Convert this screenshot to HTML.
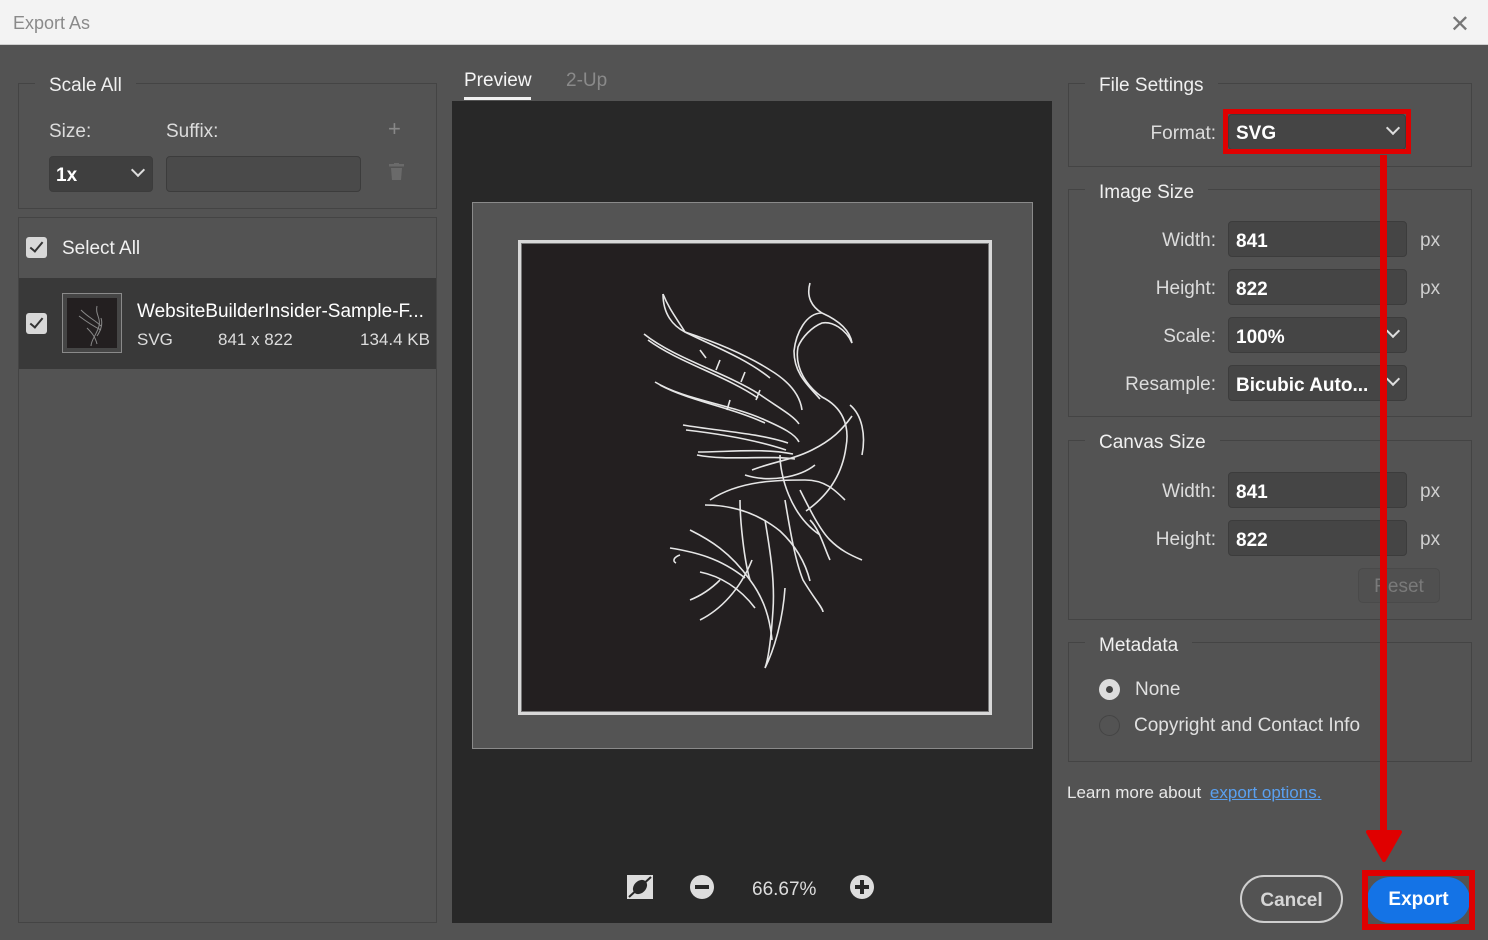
<!DOCTYPE html>
<html><head><meta charset="utf-8"><style>
*{box-sizing:border-box;margin:0;padding:0}
body{width:1488px;height:940px;background:#535353;font-family:"Liberation Sans",sans-serif;color:#e8e8e8;position:relative;overflow:hidden}
.abs{position:absolute}
.title{left:0;top:0;width:1488px;height:45px;background:#f3f3f3;border-bottom:1px solid #cfcfcf}
.title span{position:absolute;left:13px;top:13px;font-size:18px;color:#8a8a8a}
.box{position:absolute;border:1px solid #444;}
.leg{position:absolute;background:#535353;padding:0 14px;font-size:19px;color:#f0f0f0;margin-top:2px}
.lbl{position:absolute;font-size:19px;color:#dcdcdc;text-align:right;margin-top:2px}
.inp{position:absolute;background:#454545;border:1px solid #3c3c3c;border-radius:4px;font-size:19px;font-weight:bold;color:#fff;padding:9px 7px 7px}
.px{position:absolute;font-size:19px;color:#cfcfcf;margin-top:2px}
.chev{position:absolute;width:10px;height:10px;border-right:2.5px solid #ddd;border-bottom:2.5px solid #ddd;transform:rotate(45deg)}
.cb{position:absolute;width:21px;height:21px;background:#d8d8d8;border-radius:3px}
.cb:after{content:"";position:absolute;left:7px;top:2px;width:5px;height:11px;border-right:2.5px solid #333;border-bottom:2.5px solid #333;transform:rotate(40deg)}
.t{margin-top:2px}
</style></head><body>
<div class="abs title"><span>Export As</span><div class="abs" style="right:18px;top:10px;font-size:24px;color:#777;font-weight:300">✕</div></div>

<!-- left -->
<div class="box" style="left:18px;top:83px;width:419px;height:126px"></div>
<div class="leg" style="left:35px;top:73px">Scale All</div>
<div class="lbl" style="left:49px;top:119px">Size:</div>
<div class="lbl" style="left:166px;top:119px">Suffix:</div>
<div class="abs" style="left:388px;top:116px;font-size:22px;color:#888">+</div>
<div class="inp" style="left:49px;top:156px;width:104px;height:36px;background:#3f3f3f;padding:8px 6px 6px">1x</div>
<div class="chev" style="left:133px;top:165px"></div>
<div class="inp" style="left:166px;top:156px;width:195px;height:36px;background:#4a4a4a"></div>
<svg class="abs" style="left:389px;top:163px" width="15" height="17"><rect x="0" y="1" width="15" height="2.5" fill="#6a6a6a"/><rect x="5" y="0" width="5" height="2" fill="#6a6a6a"/><path d="M2 5h11l-1 12H3z" fill="#6a6a6a"/></svg>

<div class="box" style="left:18px;top:217px;width:419px;height:706px"></div>
<div class="cb" style="left:26px;top:237px"></div>
<div class="abs t" style="left:62px;top:236px;font-size:19px;color:#f0f0f0">Select All</div>
<div class="abs" style="left:19px;top:278px;width:417px;height:91px;background:#393939"></div>
<div class="cb" style="left:26px;top:313px"></div>
<div class="abs" style="left:62px;top:293px;width:60px;height:60px;background:#454545;border:1px solid #8a8a8a"></div>
<div class="abs" style="left:67px;top:298px;width:50px;height:50px;background:#231f20"></div>
<svg class="abs" style="left:67px;top:298px" width="50" height="50" fill="none" stroke="#888" stroke-width="1"><path d="M14 12c8 8 14 10 20 16M12 18c8 6 14 10 22 14M30 8c-2 8 4 12 2 20-2 8-8 14-8 20M20 30c4 4 8 8 10 16M34 20c2 6 0 12-4 18"/></svg>
<div class="abs t" style="left:137px;top:299px;font-size:19px;color:#fff">WebsiteBuilderInsider-Sample-F...</div>
<div class="abs t" style="left:137px;top:328px;font-size:17px;color:#ddd">SVG</div>
<div class="abs t" style="left:218px;top:328px;font-size:17px;color:#ddd">841 x 822</div>
<div class="abs t" style="left:360px;top:328px;font-size:17px;color:#ddd">134.4 KB</div>

<!-- center -->
<div class="abs t" style="left:464px;top:68px;font-size:19px;color:#f5f5f5">Preview</div>
<div class="abs" style="left:464px;top:97px;width:67px;height:3px;background:#f0f0f0"></div>
<div class="abs t" style="left:566px;top:68px;font-size:19px;color:#8a8a8a">2-Up</div>
<div class="abs" style="left:452px;top:101px;width:600px;height:822px;background:#282828"></div>
<div class="abs" style="left:472px;top:202px;width:561px;height:547px;background:#545454;border:1px solid #8a8a8a"></div>
<div class="abs" style="left:518px;top:240px;width:474px;height:475px;background:#231f20;border:3px solid #d8d8d8;box-shadow:inset 0 0 0 1px #777"></div>
<svg class="abs" style="left:0;top:0" width="1488" height="940" fill="none" stroke="#e6e6e6" stroke-width="1.6">
<path d="M663 294c0 20 10 32 22 38 30 10 60 22 85 38 20 12 30 25 32 40"/>
<path d="M663 294c6 15 14 25 22 38M685 332c28 14 60 26 85 46"/>
<path d="M644 334c30 24 80 38 115 60 20 14 35 22 40 30"/>
<path d="M648 340c30 22 78 36 110 58"/>
<path d="M655 382c30 18 75 22 110 38 18 8 30 14 34 22"/>
<path d="M660 385c30 16 70 22 105 38"/>
<path d="M683 425c35 6 75 8 105 18"/>
<path d="M686 430c35 4 70 10 100 20"/>
<path d="M698 452c30 0 65 -4 95 2"/>
<path d="M697 455c30 6 70 0 98 4"/>
<path d="M700 350l6 8M720 360l-4 10M745 372l-4 10M730 400l-3 10M760 390l-4 10"/>
<path d="M810 283c-4 14 2 24 12 30 18 8 28 18 30 30-6-14-20-22-30-20-10 4-20 14-24 24-4 22 10 40 24 50 20 10 28 28 24 50-4 30-20 50-40 64"/>
<path d="M822 313c-16 0-26 20-28 38 0 24 16 36 26 48"/>
<path d="M850 405c12 10 16 30 12 50"/>
<path d="M752 470c20-8 40-10 60-20 20-10 30-20 40-34"/>
<path d="M745 475c25 8 55 2 70-10"/>
<path d="M710 500c30-20 70-20 95-20 20 0 30 10 40 20"/>
<path d="M705 505c30 0 55 10 75 26 15 14 25 30 30 50"/>
<path d="M690 530c20 10 40 22 60 50 15 20 20 40 22 60"/>
<path d="M670 548c25 4 50 10 75 30"/>
<path d="M700 572c20 4 40 16 55 36"/>
<path d="M700 620c20-10 40-30 52-60"/>
<path d="M765 520c5 30 10 60 8 90 -2 30-5 50-8 58 10-20 18-50 20-80"/>
<path d="M785 500c5 30 10 60 18 80 12 20 20 28 20 32"/>
<path d="M800 490c10 20 20 40 30 50 10 10 20 15 32 20"/>
<path d="M740 500c0 20 4 60 10 80"/>
<path d="M780 455c0 20 10 60 40 80"/>
<path d="M810 520c10 10 15 30 20 40"/>
<path d="M680 555c-6 2-8 6-4 8M690 600c10-4 20-10 30-20"/>
</svg>
<svg class="abs" style="left:626px;top:874px" width="30" height="26"><rect x="1" y="1" width="26" height="24" fill="#ddd"/><path d="M3 23L25 3" stroke="#282828" stroke-width="2"/><ellipse cx="14" cy="13" rx="8" ry="6" fill="#282828" transform="rotate(-45 14 13)"/></svg>
<svg class="abs" style="left:689px;top:874px" width="26" height="26"><circle cx="13" cy="13" r="12" fill="#ddd"/><rect x="6" y="11" width="14" height="4" fill="#282828"/></svg>
<div class="abs t" style="left:752px;top:877px;font-size:19px;color:#ddd">66.67%</div>
<svg class="abs" style="left:849px;top:874px" width="26" height="26"><circle cx="13" cy="13" r="12" fill="#ddd"/><rect x="6" y="11" width="14" height="4" fill="#282828"/><rect x="11" y="6" width="4" height="14" fill="#282828"/></svg>

<!-- right -->
<div class="box" style="left:1068px;top:83px;width:404px;height:84px"></div>
<div class="leg" style="left:1085px;top:73px">File Settings</div>
<div class="lbl" style="left:1100px;top:121px;width:116px">Format:</div>
<div class="inp" style="left:1228px;top:114px;width:178px;height:36px;padding:8px 7px 6px">SVG</div>
<div class="chev" style="left:1388px;top:123px"></div>

<div class="box" style="left:1068px;top:189px;width:404px;height:228px"></div>
<div class="leg" style="left:1085px;top:180px">Image Size</div>
<div class="lbl" style="left:1100px;top:228px;width:116px">Width:</div>
<div class="inp" style="left:1228px;top:221px;width:179px;height:36px">841</div>
<div class="px" style="left:1420px;top:228px">px</div>
<div class="lbl" style="left:1100px;top:276px;width:116px">Height:</div>
<div class="inp" style="left:1228px;top:269px;width:179px;height:36px">822</div>
<div class="px" style="left:1420px;top:276px">px</div>
<div class="lbl" style="left:1100px;top:324px;width:116px">Scale:</div>
<div class="inp" style="left:1228px;top:317px;width:179px;height:36px">100%</div>
<div class="chev" style="left:1388px;top:326px"></div>
<div class="lbl" style="left:1100px;top:372px;width:116px">Resample:</div>
<div class="inp" style="left:1228px;top:365px;width:179px;height:36px">Bicubic Auto...</div>
<div class="chev" style="left:1388px;top:374px"></div>

<div class="box" style="left:1068px;top:440px;width:404px;height:180px"></div>
<div class="leg" style="left:1085px;top:430px">Canvas Size</div>
<div class="lbl" style="left:1100px;top:479px;width:116px">Width:</div>
<div class="inp" style="left:1228px;top:472px;width:179px;height:36px">841</div>
<div class="px" style="left:1420px;top:479px">px</div>
<div class="lbl" style="left:1100px;top:527px;width:116px">Height:</div>
<div class="inp" style="left:1228px;top:520px;width:179px;height:36px">822</div>
<div class="px" style="left:1420px;top:527px">px</div>
<div class="abs" style="left:1358px;top:568px;width:82px;height:35px;border:1px solid #4a4a4a;border-radius:5px;background:#505050;font-size:19px;color:#7a7a7a;text-align:center;padding-top:7px">Reset</div>

<div class="box" style="left:1068px;top:642px;width:404px;height:120px"></div>
<div class="leg" style="left:1085px;top:633px">Metadata</div>
<div class="abs" style="left:1099px;top:679px;width:21px;height:21px;border-radius:50%;background:#ddd"></div>
<div class="abs" style="left:1106px;top:686px;width:7px;height:7px;border-radius:50%;background:#444"></div>
<div class="abs t" style="left:1135px;top:677px;font-size:19px;color:#e0e0e0">None</div>
<div class="abs" style="left:1099px;top:715px;width:21px;height:21px;border-radius:50%;border:1.5px solid #444"></div>
<div class="abs t" style="left:1134px;top:713px;font-size:19px;color:#e0e0e0">Copyright and Contact Info</div>
<div class="abs t" style="left:1067px;top:781px;font-size:17px;color:#e8e8e8">Learn more about <span style="color:#5aa0f0;text-decoration:underline;margin-left:4px">export options.</span></div>

<div class="abs" style="left:1240px;top:875px;width:103px;height:48px;border:2px solid #cfcfcf;border-radius:24px;font-size:19px;font-weight:bold;color:#d6d6d6;text-align:center;padding-top:13px">Cancel</div>
<div class="abs" style="left:1367px;top:877px;width:103px;height:46px;background:#1473e6;border-radius:23px;font-size:19px;font-weight:bold;color:#fff;text-align:center;padding-top:12px">Export</div>

<!-- red annotations -->
<div class="abs" style="left:1223px;top:109px;width:188px;height:45px;border:5px solid #e00000"></div>
<div class="abs" style="left:1380px;top:155px;width:7px;height:680px;background:#e00000"></div>
<svg class="abs" style="left:1364px;top:826px" width="40" height="40"><path d="M4 6l16 28 16-28z" fill="#e00000" stroke="#e00000" stroke-width="4" stroke-linejoin="round"/></svg>
<div class="abs" style="left:1362px;top:870px;width:113px;height:60px;border:6px solid #e00000"></div>
</body></html>
